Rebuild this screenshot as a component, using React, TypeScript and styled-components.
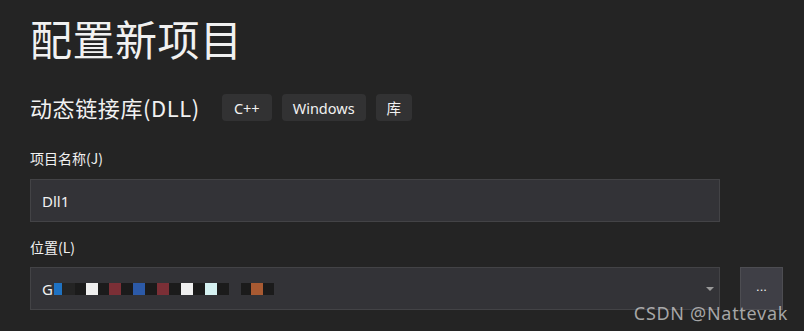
import { createGlobalStyle } from 'styled-components'
import styled from 'styled-components'

const GlobalStyle = createGlobalStyle`
  html, body {
    margin: 0;
    background: #242424;
  }
  body {
    font-family: "Noto Sans", "Noto Sans CJK SC", sans-serif;
    color: #f1f1f1;
  }
`

const Page = styled.div`
  width: 804px;
  height: 331px;
  padding: 9px 30px 0 30px;
  box-sizing: border-box;
  position: relative;
  overflow: hidden;
`
const Title = styled.h1`
  margin: 0;
  font-family: "Noto Sans CJK SC", sans-serif;
  font-size: 42px;
  font-weight: 400;
  line-height: 58px;
  letter-spacing: 0.5px;
`
const SubRow = styled.div`
  display: flex;
  align-items: center;
  margin-top: 27px;
  height: 27px;
`
const SubTitle = styled.div`
  font-family: "Noto Sans CJK SC", sans-serif;
  font-size: 22px;
  letter-spacing: 0.6px;
  margin-right: 22px;
  line-height: 27px;
`
const Tags = styled.div`
  display: flex;
  gap: 10px;
`
const Tag = styled.span`
  display: inline-flex;
  align-items: center;
  justify-content: center;
  height: 27px;
  padding: 0 ${(p: { $pad?: number }) => p.$pad ?? 12}px;
  background: #323233;
  border-radius: 4px;
  font-family: "Noto Sans", "Noto Sans CJK SC", sans-serif;
  font-size: 14.5px;
`
const Label = styled.div`
  font-family: "Noto Sans CJK SC", sans-serif;
  font-size: 14px;
  line-height: 20px;
  margin-top: ${(p: { $top: number }) => p.$top}px;
`
const FieldRow = styled.div`
  display: flex;
  gap: 20px;
  margin-top: ${(p: { $top: number }) => p.$top}px;
`
const Field = styled.div`
  flex-shrink: 0;
  box-sizing: border-box;
  width: 690px;
  height: 43px;
  background: #333337;
  border: 1px solid #434346;
  display: flex;
  align-items: center;
  padding-left: 11px;
  font-size: 15px;
  position: relative;
`
const Arrow = styled.span`
  position: absolute;
  right: 5px;
  top: 19px;
  width: 0;
  height: 0;
  border-left: 4px solid transparent;
  border-right: 4px solid transparent;
  border-top: 4px solid #999999;
`
const Browse = styled.button`
  flex-shrink: 0;
  box-sizing: border-box;
  width: 43px;
  height: 43px;
  background: #3f3f46;
  border: 1px solid #4d4d52;
  color: #f1f1f1;
  font-size: 13px;
  padding: 0 0 4px;
`
const Mask = styled.span`
  display: inline-block;
  width: ${(p: { $w: number; $c: string }) => p.$w}px;
  height: 12px;
  background: ${(p) => p.$c};
`
const Masks = styled.span`
  display: inline-flex;
  margin-left: 1px;
`
const Watermark = styled.div`
  position: absolute;
  right: 16px;
  bottom: 6px;
  font-family: "Noto Sans", sans-serif;
  font-size: 18px;
  letter-spacing: 0.7px;
  color: rgba(210, 210, 210, 0.75);
`

const masks: [number, string][] = [
  [8, '#1f72c2'],
  [13, '#242424'],
  [11, '#1b1b1b'],
  [12, '#efefef'],
  [11, '#1b1b1b'],
  [12, '#7b2f36'],
  [12, '#1b1b1b'],
  [12, '#2c5aa8'],
  [12, '#1b1b1b'],
  [12, '#7b2f36'],
  [12, '#1b1b1b'],
  [12, '#efefef'],
  [12, '#1b1b1b'],
  [12, '#d5f1f1'],
  [12, '#1b1b1b'],
  [12, '#333337'],
  [10, '#1b1b1b'],
  [12, '#a85a32'],
  [11, '#1b1b1b'],
]

export default function App() {
  return (
    <>
      <GlobalStyle />
      <Page>
        <Title>配置新项目</Title>
        <SubRow>
          <SubTitle>动态链接库(DLL)</SubTitle>
          <Tags>
            <Tag $pad={12}>C++</Tag>
            <Tag $pad={11}>Windows</Tag>
            <Tag $pad={11}>库</Tag>
          </Tags>
        </SubRow>
        <Label $top={27}>项目名称(J)</Label>
        <FieldRow $top={11}>
          <Field>Dll1</Field>
        </FieldRow>
        <Label $top={15}>位置(L)</Label>
        <FieldRow $top={10}>
          <Field>
            G
            <Masks>
              {masks.map(([w, c], i) => (
                <Mask key={i} $w={w} $c={c} />
              ))}
            </Masks>
            <Arrow />
          </Field>
          <Browse>...</Browse>
        </FieldRow>
        <Watermark>CSDN @Nattevak</Watermark>
      </Page>
    </>
  )
}
